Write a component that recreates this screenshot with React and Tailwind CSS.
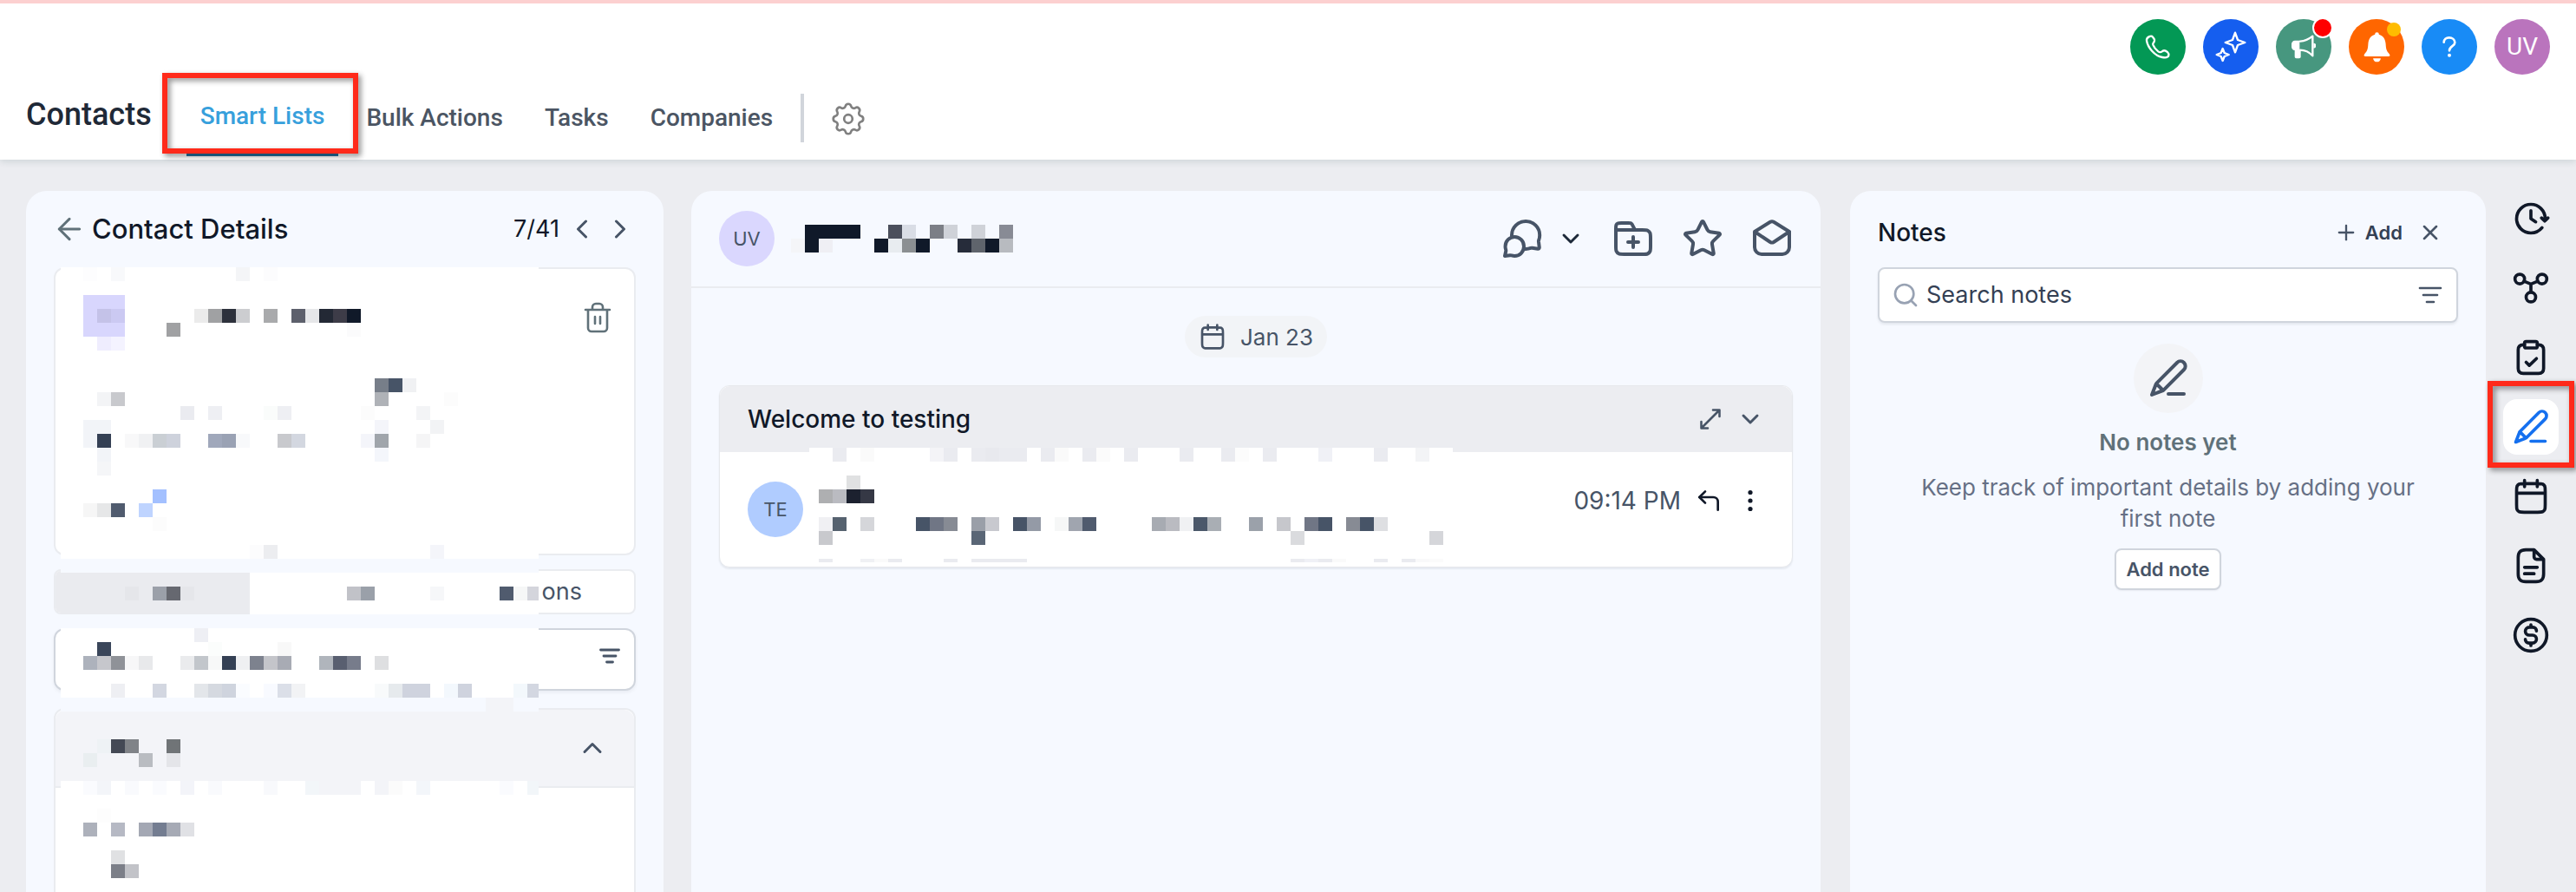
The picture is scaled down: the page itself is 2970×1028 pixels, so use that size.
import { ArrowLeft, ChevronDown, ChevronLeft, ChevronRight, ChevronUp, CornerUpLeft, Plus, Search, Star, X } from 'lucide-react';

// Every redaction mosaic is snapped to the same 16px grid
const CELL = 16;

// [row, first column, ...colours], a null leaves the cell empty
const detailRuns = [
  [0, 6, '#fdfdfe', null, '#f8f9fb'], [0, 17, '#f4f5f7', null, '#fcfcfd'],
  [2, 6, '#d8d6fd', '#d8d6fd', '#d8d6fd'],
  [3, 6, '#d8d6fd', '#c4c2e8', '#cbc9f2'], [3, 14, '#ebebeb', '#a0a1a3', '#2d313c', '#cccdd0', null, '#a9aaac', null, '#5d606c', '#e6e7e9', '#232935', '#3d3c48', '#101929'],
  [4, 6, '#d8d6fd', '#d8d6fd', '#d8d6fd'], [4, 12, '#a0a1a3'], [4, 25, '#fbfbfc'],
  [5, 7, '#efedfe', '#f4f3ff'],
  [8, 27, '#777e89', '#475467', '#f0f1f3'],
  [9, 7, '#f3f4f6', '#c8c9cd'], [9, 27, '#afb2b7'], [9, 32, '#fcfcfc'],
  [10, 13, '#eaebf0', null, '#eeeff3', null, null, null, '#fafcfb', '#eeeff3'], [10, 26, '#fcfcfc', null, null, null, '#f3f4f6'],
  [11, 6, '#f2f4f8', '#f2f4f8'], [11, 27, '#f4f5fa'], [11, 31, '#f2f3f5'],
  [12, 6, '#f2f4f8', '#344054', null, '#f8f8f9', '#f0f1f3', '#cacfd4', '#ced2dc', null, null, '#a0a8bb', '#9aa2b4', '#f8f9fb', null, null, '#c8c9cd', '#d3d7e0'],
  [12, 26, '#f4f5fa', '#a0a5ab', null, null, '#f5f5f6'],
  [13, 7, '#f2f4f8'], [13, 27, '#f4f6fb'],
  [14, 7, '#f5f6f8'],
  [16, 11, '#a3c0ff'],
  [17, 6, '#f6f6f6', '#e6e7e8', '#505b6e', null, '#bfd4ff'],
  [18, 11, '#fcfcfc'],
  [20, 18, '#fcfcfd', '#ecedf0'], [20, 31, '#f4f5fa'],
  [23, 9, '#e5e6ea', null, '#9ba0a9', '#666870', '#e5e6ea'], [23, 25, '#c1c2c8', '#9aa0a9'], [23, 31, '#f6f7f9'], [23, 36, '#505b6e', '#f6f7f7', '#d4d5dc'],
  [26, 14, '#eeeff4'],
  [27, 7, '#3a465a'], [27, 15, '#fbfdfc'], [27, 20, '#f8f8f8'],
  [28, 6, '#adb2bc', '#c6c7cc', '#8f9298', '#f7f7f8', '#e8e9eb', null, null, '#eaebed', '#c2c6cb', '#f7f8f8', '#344054', '#eff0f2', '#7d828e', '#c4c5ca', '#a8abb4'],
  [28, 23, '#b0b5bc', '#595f70', '#777c8b', null, '#dedfe1'],
  [30, 8, '#eeeff3', null, null, '#d3d7e1', null, null, '#e3e6ea', '#d5d9e0', '#cfd4de', '#fafcff', null, '#f8faff', '#dbdfe8', '#f2f3f5'],
  [30, 27, '#f8fafb', '#e6eaed', '#cfd3de', '#cfd3de', null, '#f3f8fd', '#cfd3de', null, null, null, '#f3f8fc', '#d3d7e1'],
  [31, 35, '#f3f4f8', '#f3f4f8'],
  [34, 7, '#eef2f5', '#444955', '#808388', null, null, '#707477'],
  [35, 6, '#e9eef0', null, null, null, '#b9bcc1', null, '#e4e5e9'],
  [37, 6, '#fafbfe', '#f3f5f9', null, '#f9fafd', null, '#fafbfe', null, '#f3f4f9', null, '#f9fafd', null, null, null, '#f8f9fc', null, null, '#f2f6f9', '#f3f4f8', '#f3f4f8', '#f3f4f8', null, '#f3f4f8', '#fbfbfb', null, '#f3f6fa'],
  [37, 36, '#fafbfe', null, '#f2f6f9'],
  [39, 7, '#fdfdfd'],
  [40, 6, '#adb1bb', null, '#b6b9c4', null, '#a4a8b4', '#747d91', '#a6aab5', '#e0e1e5'],
  [42, 8, '#e0e1e3'],
  [43, 8, '#7c7f88', '#c2c3c8'],
];

const detailFills = [
  [70, 0, 551, 336, '#ffffff'],
  [70, 336, 551, 16, '#f6f9ff'],
  [70, 352, 218, 48, '#eaebef'],
  [288, 352, 333, 48, '#ffffff'],
  [70, 400, 551, 16, '#f6f9ff'],
  [70, 416, 551, 80, '#ffffff'],
  [70, 496, 551, 16, '#f6f9ff'],
  [70, 512, 551, 80, '#f3f4f8'],
  [70, 592, 551, 128, '#ffffff'],
];

const nameRuns = [
  [-3, 58, '#101929', '#101929', '#101929', '#101929', null, null, '#4b4f5c', '#d9dde5', null, '#7c7f86', '#cfd2d8', null, '#cfd2d8', null, '#888b95'],
  [-2, 57, '#f4f5f8', '#101929', '#efeff4', null, null, null, '#101929', '#e8ecf0', '#8b8f92', '#101929', null, null, '#262c3a', '#5f646c', '#101929', '#b8bbc0'],
];

const messageRuns = [
  [13, 60, '#eaebf0', null, '#fafafa', null, null, null, null, '#f4f4f7', '#eaebf0', null, '#eaebf0', '#e8e9ee', '#eaebf0', '#eaebf0', null, '#eaebf0', '#fafafa', null, '#eaebf0', '#fbfbfb', null, '#eaebf0'],
  [13, 85, '#eaebf0', null, null, '#eaebf0', '#fcfcfc', null, '#eaebf0', null, null, null, '#f0f1f6', null, null, null, '#eaebf0', null, null, '#f3f4f6'],
  [15, 61, '#e0e1e2'],
  [16, 59, '#aeafb1', '#babbc1', '#1c212f', '#353845'],
  [18, 59, '#f0f0f3', '#56626f', null, '#d5d6da', null, null, null, '#475467', '#707685', '#878b94', null, '#9a9fa8', '#c8c9cf', null, '#475467', '#949aa6', null, '#f6f7f7', '#a0a5af', '#505b6e'],
  [18, 83, '#a7abb2', '#babbc1', '#f0f1f3', '#4b586a', '#a9aeb4', null, null, '#9ba1aa', null, '#c6c7cc', null, '#707685', '#475467', null, '#878b94', '#475467', '#dedfe2'],
  [19, 59, '#c8c9cd'], [19, 70, '#5a6676'], [19, 93, '#dadbde'], [19, 103, '#d5d6da'],
  [21, 59, '#eaebf0', null, null, '#f0f1f4', '#fafafa', '#eaebf0', null, null, null, '#eaebf0', null, '#eaebf0', '#eaebf0', '#eaebf0', '#eaebf0'],
  [21, 93, '#eaebf0', '#f0f1f6', '#eaebf0', '#fafafa', null, null, '#eaebf0', null, '#eaebf0', '#f9f9fa', '#fbfbfb'],
];

function Mosaic({ x, y, width, height, fills = [], runs, className }) {
  return (
    <svg width={width} height={height} viewBox={`${x} ${y} ${width} ${height}`} shapeRendering="crispEdges" className={className} aria-hidden="true">
      {fills.map(([fx, fy, w, h, fill]) => (
        <rect key={fx + '-' + fy} x={fx} y={fy} width={w} height={h} fill={fill} />
      ))}
      {runs.map(([row, start, ...colors]) =>
        colors.map((fill, i) =>
          fill ? <rect key={`${row}-${start + i}`} x={(start + i) * CELL} y={row * CELL} width={CELL} height={CELL} fill={fill} /> : null
        )
      )}
    </svg>
  );
}

function Icon({ size = 44, stroke = 2, viewBox = '0 0 24 24', className = '', children }) {
  return (
    <svg width={size} height={size} viewBox={viewBox} fill="none" stroke="currentColor" strokeWidth={stroke} strokeLinecap="round" strokeLinejoin="round" className={`shrink-0 ${className}`} aria-hidden="true">
      {children}
    </svg>
  );
}

const PencilPath = () => (
  <path d="M12 21H21M2.5 21.5L8.05 19.37C8.4 19.23 8.58 19.16 8.75 19.07C8.9 18.99 9.04 18.9 9.17 18.8C9.32 18.68 9.45 18.55 9.72 18.28L21 7C22.1 5.9 22.1 4.1 21 3C19.9 1.9 18.1 1.9 17 3L5.72 14.28C5.45 14.55 5.32 14.68 5.2 14.83C5.1 14.96 5 15.1 4.93 15.25C4.84 15.42 4.77 15.6 4.63 15.95L2.5 21.5ZM2.5 21.5L4.56 16.15C4.7 15.77 4.78 15.57 4.9 15.49C5.02 15.41 5.15 15.38 5.28 15.4C5.43 15.43 5.58 15.58 5.87 15.87L8.13 18.13C8.42 18.42 8.56 18.56 8.59 18.72C8.62 18.85 8.59 18.98 8.51 19.09C8.43 19.22 8.23 19.29 7.85 19.44L2.5 21.5Z" />
);

const CalendarPath = () => (
  <path d="M21 10H3M16 2V6M8 2V6M7.8 22H16.2C17.9 22 18.7 22 19.4 21.7C19.9 21.4 20.4 20.9 20.7 20.4C21 19.7 21 18.9 21 17.2V8.8C21 7.1 21 6.3 20.7 5.6C20.4 5.1 19.9 4.6 19.4 4.3C18.7 4 17.9 4 16.2 4H7.8C6.1 4 5.3 4 4.6 4.3C4.1 4.6 3.6 5.1 3.3 5.6C3 6.3 3 7.1 3 8.8V17.2C3 18.9 3 19.7 3.3 20.4C3.6 20.9 4.1 21.4 4.6 21.7C5.3 22 6.1 22 7.8 22Z" />
);

const FilterPath = () => <path d="M6 12H18M3 6H21M9 18H15" />;

const navLinks = ['Smart Lists', 'Bulk Actions', 'Tasks', 'Companies'];

function TopActions() {
  return (
    <div className="flex justify-end gap-5 pt-[18px] pr-[30px] text-white">
      <button aria-label="Phone" className="flex size-16 items-center justify-center rounded-full bg-[#039855]">
        <Icon size={30} stroke={7} viewBox="-3 -3 90 90">
          <path d="M11 7C5 10 2 15 3 21C7 44 30 73 57 78C68 80 77 79 79 72C81 66 78 63 75 60L69 56C65 54 60 55 56 58C51 62 47 61 43 58C34 51 28 43 25 35C24 32 25 29 27 27L29 24C31 21 31 18 29 15L24 8C21 4 15 5 11 7Z" />
        </Icon>
      </button>
      <button aria-label="Ask AI" className="flex size-16 items-center justify-center rounded-full bg-[#155eef]">
        <Icon size={36} stroke={7} viewBox="0 0 108 108">
          <path d="M69 5L78 30L103 39L78 48L69 73L60 48L35 39L60 30ZM26 60L32 75L47 81L32 87L26 102L20 87L5 81L20 75Z" />
        </Icon>
      </button>
      <button aria-label="Announcements" className="relative flex size-16 items-center justify-center rounded-full bg-[#47977f]">
        <Icon size={28} stroke={7} viewBox="0 0 84 84">
          <path d="M28 20H12C5 20 0 25 0 32V42C0 49 5 54 11 54V76C11 80 13 82 17 82H26C30 82 32 80 32 76V54H28Z" fill="currentColor" stroke="none" />
          <path d="M30 23C48 22 62 14 73 5V73C62 61 48 53 30 53" />
          <path d="M76 29A9 9 0 0 1 76 47Z" fill="currentColor" stroke="none" />
        </Icon>
        <span className="absolute -top-0.5 -right-0.5 size-6 rounded-full border-2 border-white bg-[#ff0000]" />
      </button>
      <button aria-label="Notifications" className="relative flex size-16 items-center justify-center rounded-full bg-[#ff6600]">
        <Icon size={35} stroke={0} viewBox="-7 0 104 104">
          <path fill="currentColor" d="M45 1A7 7 0 0 0 38 8C24 12 16 24 15 40C14 58 12 65 3 74C-1 79 0 83 6 83H84C90 83 91 79 87 74C78 65 76 58 75 40C74 24 66 12 52 8A7 7 0 0 0 45 1ZM32 90H58A13 12 0 0 1 32 90Z" />
        </Icon>
        <span className="absolute top-1 right-1 size-4 rounded-full bg-[#ffbc00]" />
      </button>
      <button aria-label="Help" className="flex size-16 items-center justify-center rounded-full bg-[#188bf6]">
        <Icon size={24} stroke={8} viewBox="-12 0 72 72">
          <path d="M5 20C5 10 13 4 23 4C34 4 43 11 43 21C43 34 24 33 24 49" />
          <circle cx="24" cy="65" r="6" fill="currentColor" stroke="none" />
        </Icon>
      </button>
      <button className="flex size-16 items-center justify-center rounded-full bg-[#ba74bd] font-['Roboto',sans-serif] text-[28px]">UV</button>
    </div>
  );
}

function Header() {
  return (
    <header className="relative z-10 border-t-4 border-[#fcd0d0] bg-white pb-1 shadow-[0_2px_8px_rgba(16,60,60,0.14)]">
      <TopActions />
      <div className="flex h-[94px] items-end pl-[30px] font-['Roboto',sans-serif] font-medium">
        <h1 className="mr-10 mb-7 text-[36px] leading-10 text-[#1f2937]">Contacts</h1>
        <nav className="flex items-end gap-4 text-[28px] leading-10 text-[#4b5563]">
          {navLinks.map((label, i) => (
            <a
              key={label}
              href="#"
              className={i === 0 ? 'relative border-b-4 border-[#2271a1] px-4 pb-[22px] text-[#37a0dc]' : 'border-b-4 border-transparent px-4 pb-5'}
            >
              {label}
              {i === 0 && (
                <span className="absolute -top-[30px] -right-[23px] -left-7 h-[93px] border-[6px] border-[#ff2a1a] drop-shadow-[3px_3px_3px_rgba(0,0,0,0.45)]" />
              )}
            </a>
          ))}
        </nav>
        <span className="mb-4 ml-4 h-14 w-1 bg-[#d1d5db]" />
        <button aria-label="Settings" className="mb-5 ml-7 text-[#808080]">
          <Icon size={46} stroke={1.4}>
            <path d="M10.325 4.317c.426-1.756 2.924-1.756 3.35 0a1.724 1.724 0 002.573 1.066c1.543-.94 3.31.826 2.37 2.37a1.724 1.724 0 001.065 2.572c1.756.426 1.756 2.924 0 3.35a1.724 1.724 0 00-1.066 2.573c.94 1.543-.826 3.31-2.37 2.37a1.724 1.724 0 00-2.572 1.065c-.426 1.756-2.924 1.756-3.35 0a1.724 1.724 0 00-2.573-1.066c-1.543.94-3.31-.826-2.37-2.37a1.724 1.724 0 00-1.065-2.572c-1.756-.426-1.756-2.924 0-3.35a1.724 1.724 0 001.066-2.573c-.94-1.543.826-3.31 2.37-2.37.996.608 2.296.07 2.572-1.065z" />
            <circle cx="12" cy="12" r="2.5" />
          </Icon>
        </button>
      </div>
    </header>
  );
}

function ContactDetails() {
  return (
    <section className="relative flex w-[735px] shrink-0 flex-col rounded-t-3xl bg-[#f6f9ff] px-8">
      <div className="flex h-[88px] items-center">
        <button aria-label="Back" className="-ml-0.5 text-[#607179]">
          <ArrowLeft size={40} strokeWidth={1.8} />
        </button>
        <h2 className="ml-1.5 flex-1 text-[31px] leading-10 font-medium text-[#101828]">Contact Details</h2>
        <span className="mr-2 text-[27px] text-[#101828]">7/41</span>
        <button aria-label="Previous contact" className="mr-2 text-[#475467]">
          <ChevronLeft size={36} strokeWidth={2} />
        </button>
        <button aria-label="Next contact" className="text-[#475467]">
          <ChevronRight size={36} strokeWidth={2} />
        </button>
      </div>

      <div className="flex h-[332px] items-start justify-end rounded-xl border-2 border-[#eaecf0] bg-white pt-[38px] pr-6">
        <button aria-label="Delete contact" className="text-[#607179]">
          <Icon size={36} stroke={2.6} viewBox="0 0 36 36">
            <path d="M4 9H32M7 9V30A4 4 0 0 0 11 34H25A4 4 0 0 0 29 30V9M12 9V6A4 4 0 0 1 16 2H20A4 4 0 0 1 24 6V9M15 17V25M21 17V25" />
          </Icon>
        </button>
      </div>

      <div className="mt-4 flex h-[52px] rounded-lg border-2 border-[#eaecf0] bg-white">
        <button aria-label="First tab" className="w-56 rounded-l-md bg-[#eaebef]" />
        <button aria-label="Second tab" className="w-56" />
        <button className="flex-1 pr-[60px] text-right text-[27px] text-[#475467]">ons</button>
      </div>

      <div className="mt-4 flex h-[72px] items-center justify-end rounded-xl border-2 border-[#d0d5dd] bg-white pr-3.5 shadow-[0_2px_4px_rgba(16,24,40,0.06)]">
        <button aria-label="Filter fields" className="mb-2 text-[#475467]">
          <Icon size={28} stroke={2.4}><FilterPath /></Icon>
        </button>
      </div>

      <div className="mt-5 flex flex-1 flex-col rounded-t-xl border-2 border-b-0 border-[#eaecf0] bg-white">
        <div className="flex h-[90px] items-center justify-end rounded-t-xl border-b-2 border-[#eaecf0] bg-[#f3f4f8] pr-[30px]">
          <button aria-label="Collapse section" className="text-[#475467]">
            <ChevronUp size={36} strokeWidth={2} />
          </button>
        </div>
      </div>

      <Mosaic x={70} y={0} width={551} height={720} fills={detailFills} runs={detailRuns} className="absolute top-[88px] left-10" />
    </section>
  );
}

function Conversation() {
  return (
    <section className="flex-1 rounded-t-3xl bg-[#f6f9ff]">
      <div className="flex h-28 items-center border-b-2 border-[#eaecf0] px-8 text-[#475467]">
        <span className="flex size-16 items-center justify-center rounded-full bg-[#dad7fe] text-[22px]">UV</span>
        <Mosaic x={912} y={-48} width={256} height={32} runs={nameRuns} className="ml-[19px]" />
        <button aria-label="Conversations" className="ml-auto">
          <Icon size={48}>
            <path d="M6.09 11.23C6.03 10.83 6 10.42 6 10C6 5.58 9.61 2 14.05 2C18.5 2 22.1 5.58 22.1 10C22.1 11 21.92 11.95 21.59 12.83C21.45 13.2 21.44 13.3 21.47 13.69L21.87 16.96C21.95 17.6 21.6 17.95 20.96 17.85L17.78 17.38C17.45 17.33 17.3 17.33 16.89 17.49C16.01 17.82 15.05 18 14.05 18C13.63 18 13.22 17.97 12.82 17.91M7.63 22C10.6 22 13 19.54 13 16.5C13 13.46 10.6 11 7.63 11C4.67 11 2.26 13.46 2.26 16.5C2.26 17.11 2.36 17.7 2.54 18.25C2.68 18.7 2.7 18.9 2.61 19.24L2 22L4.99 21.59C5.3 21.55 5.5 21.57 5.88 21.7C6.43 21.89 7.02 22 7.63 22Z" />
          </Icon>
        </button>
        <button aria-label="More conversations" className="ml-4 text-[#1d2939]">
          <ChevronDown size={32} strokeWidth={2.2} />
        </button>
        <button aria-label="Add to folder" className="ml-8">
          <Icon size={48}>
            <path d="M13 7L11.88 4.77C11.56 4.13 11.4 3.81 11.16 3.57C10.95 3.36 10.7 3.21 10.42 3.11C10.1 3 9.74 3 9.02 3H5.2C4.08 3 3.52 3 3.09 3.22C2.72 3.41 2.41 3.72 2.22 4.09C2 4.52 2 5.08 2 6.2V7M2 7H17.2C18.88 7 19.72 7 20.36 7.33C20.93 7.61 21.39 8.07 21.67 8.64C22 9.28 22 10.12 22 11.8V16.2C22 17.88 22 18.72 21.67 19.36C21.39 19.93 20.93 20.39 20.36 20.67C19.72 21 18.88 21 17.2 21H6.8C5.12 21 4.28 21 3.64 20.67C3.07 20.39 2.61 19.93 2.33 19.36C2 18.72 2 17.88 2 16.2V7ZM12 17V11M9 14H15" />
          </Icon>
        </button>
        <button aria-label="Star" className="ml-8">
          <Star size={48} strokeWidth={2} />
        </button>
        <button aria-label="Mark as read" className="ml-8">
          <Icon size={48}>
            <path d="M2 8V17A4 4 0 0 0 6 21H18A4 4 0 0 0 22 17V8M2 8L11 2.4A2 2 0 0 1 13 2.4L22 8L13 14A2 2 0 0 1 11 14Z" />
          </Icon>
        </button>
      </div>

      <div className="mx-8 mt-8 flex justify-center">
        <div className="flex h-12 items-center gap-4 rounded-full bg-[#f2f4f7] px-4 text-[26px] text-[#475467]">
          <Icon size={32}><CalendarPath /></Icon>
          Jan 23
        </div>
      </div>

      <article className="relative mx-8 mt-8 rounded-xl border border-[#e6e8ec] bg-white shadow-[0_2px_2px_rgba(16,24,40,0.07)]">
        <div className="flex h-[76px] items-center rounded-t-xl bg-[#ecedf1] px-8 text-[#475467]">
          <h3 className="flex-1 text-[28px] font-medium text-[#101828]">Welcome to testing</h3>
          <button aria-label="Expand" className="mr-3">
            <Icon size={36} stroke={1.7}>
              <path d="M5 19L19 5M14 5H19V10M5 14V19H10" />
            </Icon>
          </button>
          <button aria-label="Collapse">
            <ChevronDown size={32} strokeWidth={2.2} />
          </button>
        </div>
        <div className="flex items-start px-8 py-[34px] text-[#475467]">
          <span className="flex size-16 items-center justify-center rounded-full bg-[#b0ccff] text-[22px]">TE</span>
          <div className="ml-auto flex h-11 items-center gap-4">
            <time className="text-[28px]">09:14 PM</time>
            <button aria-label="Reply" className="text-[#101828]">
              <CornerUpLeft size={32} strokeWidth={2} />
            </button>
            <button aria-label="More options" className="text-[#101828]">
              <Icon size={32} stroke={0} viewBox="0 0 32 32" className="fill-current">
                <circle cx="16" cy="6.5" r="2.6" />
                <circle cx="16" cy="16" r="2.6" />
                <circle cx="16" cy="25.5" r="2.6" />
              </Icon>
            </button>
          </div>
        </div>
        <Mosaic x={933} y={208} width={742} height={132} fills={[[933, 208, 742, 132, '#ffffff']]} runs={messageRuns} className="absolute top-[71px] left-[103px]" />
      </article>
    </section>
  );
}

function Notes() {
  return (
    <section className="w-[733px] shrink-0 rounded-t-3xl bg-[#f6f9ff] px-8">
      <div className="flex h-[88px] items-center pt-2 text-[#475467]">
        <h2 className="flex-1 text-[28px] font-medium text-[#101828]">Notes</h2>
        <button className="mr-[18px] flex items-center gap-2 text-[22px] font-semibold text-[#344054]">
          <Plus size={28} strokeWidth={2} className="text-[#475467]" />
          Add
        </button>
        <button aria-label="Close notes" className="mr-[18px]">
          <X size={28} strokeWidth={2.2} />
        </button>
      </div>

      <div className="flex h-16 items-center rounded-lg border-2 border-[#d0d5dd] bg-white px-3.5 shadow-[0_2px_3px_rgba(16,24,40,0.08)]">
        <Search size={32} strokeWidth={2} className="shrink-0 text-[#98a2b3]" />
        <input aria-label="Search notes" placeholder="Search notes" className="ml-2 min-w-0 flex-1 text-[27px] outline-none placeholder:text-[#344054]" />
        <button aria-label="Filter notes" className="text-[#475467]">
          <Icon size={32}><FilterPath /></Icon>
        </button>
      </div>

      <div className="mt-6 flex flex-col items-center text-center text-[26px] leading-9">
        <span className="flex size-20 items-center justify-center rounded-full bg-[#f3f4f7] text-[#475467]">
          <Icon size={48}><PencilPath /></Icon>
        </span>
        <h3 className="mt-4 font-semibold text-[#607179]">No notes yet</h3>
        <p className="mt-4 max-w-[600px] text-[#667085]">Keep track of important details by adding your first note</p>
        <button className="mt-4 h-12 rounded-lg border-2 border-[#d0d5dd] bg-white px-[11px] text-[22px] font-semibold text-[#475467] shadow-[0_1px_2px_rgba(16,24,40,0.06)]">
          Add note
        </button>
      </div>
    </section>
  );
}

const railItems = [
  { label: 'Activity', icon: <path d="M22.7 11.5L20.7 13.5L18.7 11.5M20.95 13C20.98 12.67 21 12.34 21 12C21 7.03 16.97 3 12 3C7.03 3 3 7.03 3 12C3 16.97 7.03 21 12 21C14.83 21 17.35 19.7 19 17.66M12 7V12L15 14" /> },
  { label: 'Associations', icon: <><circle cx="5" cy="6.3" r="3" /><circle cx="19" cy="6.3" r="3" /><circle cx="12" cy="17.7" r="3" /><path d="M7.7 7.7L12 9.5L16.3 7.7M12 9.5V14.5" /></> },
  { label: 'Tasks', icon: <><path d="M16 4H16.8C18.9 4 20 5.1 20 7.2V18.8C20 20.9 18.9 22 16.8 22H7.2C5.1 22 4 20.9 4 18.8V7.2C4 5.1 5.1 4 7.2 4H8M9 15L11 17L15.5 12.7" /><rect x="8" y="2" width="8" height="4" rx="1" /></> },
  { label: 'Notes', icon: <PencilPath /> },
  { label: 'Appointments', icon: <CalendarPath /> },
  { label: 'Documents', icon: <path d="M14 2.3V6.4C14 7.3 14.7 8 15.6 8H19.7M8 13H16M8 17H14M14 2H8.8C5.4 2 4 3.4 4 6.8V17.2C4 20.6 5.4 22 8.8 22H15.2C18.6 22 20 20.6 20 17.2V8Z" /> },
  { label: 'Payments', icon: <><circle cx="12" cy="12" r="10" /><path d="M8.5 14.67C8.5 15.96 9.54 17 10.83 17H13C14.38 17 15.5 15.88 15.5 14.5C15.5 13.12 14.38 12 13 12H11C9.62 12 8.5 10.88 8.5 9.5C8.5 8.12 9.62 7 11 7H13.17C14.46 7 15.5 8.04 15.5 9.33M12 5.5V7M12 17V18.5" /></> },
];

function Rail() {
  return (
    <aside className="flex w-[72px] shrink-0 flex-col items-center gap-4">
      {railItems.map(({ label, icon }) => (
        <button
          key={label}
          aria-label={label}
          className={`relative flex size-16 items-center justify-center ${label === 'Notes' ? 'rounded-2xl bg-white text-[#1570ef]' : 'text-[#101828]'}`}
        >
          <Icon>{icon}</Icon>
          {label === 'Notes' && (
            <span className="absolute -top-[21px] -right-[18px] -bottom-[15px] -left-[18px] border-[6px] border-[#ff2a1a] drop-shadow-[3px_3px_3px_rgba(0,0,0,0.45)]" />
          )}
        </button>
      ))}
    </aside>
  );
}

export default function App() {
  return (
    <div className="flex min-h-screen flex-col overflow-hidden bg-[#ecedf1] font-['Inter',sans-serif]">
      <Header />
      <main className="flex flex-1 pt-9 pr-4 pl-[30px]">
        <ContactDetails />
        <div className="flex flex-1 pr-[34px] pl-8">
          <Conversation />
        </div>
        <Notes />
        <div className="ml-4 flex">
          <Rail />
        </div>
      </main>
    </div>
  );
}
